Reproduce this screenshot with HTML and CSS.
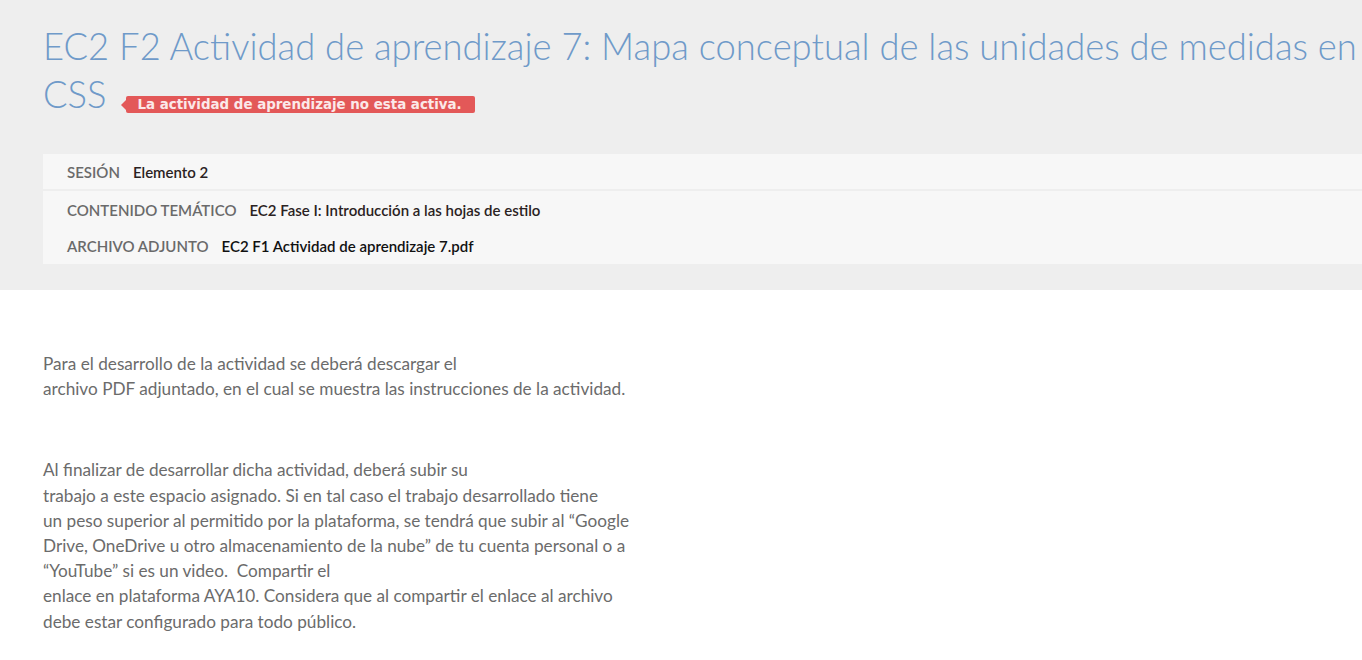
FILE: index.html
```html
<!DOCTYPE html>
<html lang="es">
<head>
<meta charset="utf-8">
<title>EC2 F2 Actividad de aprendizaje 7</title>
<link rel="stylesheet" href="styles.css">
</head>
<body>
<header class="hero">
  <div class="hero-inner">
    <h1 class="title">EC2 F2 Actividad de aprendizaje 7: Mapa conceptual de las unidades de medidas en CSS <span class="badge">La actividad de aprendizaje no esta activa.</span></h1>
    <div class="meta">
      <div class="meta-block">
        <div class="meta-row"><span class="label">SESIÓN</span><span class="value">Elemento 2</span></div>
      </div>
      <div class="meta-block meta-block-2">
        <div class="meta-row"><span class="label">CONTENIDO TEMÁTICO</span><span class="value">EC2 Fase I: Introducción a las hojas de estilo</span></div>
        <div class="meta-row"><span class="label">ARCHIVO ADJUNTO</span><span class="value value-file">EC2 F1 Actividad de aprendizaje 7.pdf</span></div>
      </div>
    </div>
  </div>
</header>
<main class="content">
  <p>Para el desarrollo de la actividad se deberá descargar el<br>archivo PDF adjuntado, en el cual se muestra las instrucciones de la actividad.</p>
  <p class="spacer">&nbsp;</p>
  <p>Al finalizar de desarrollar dicha actividad, deberá subir su<br>trabajo a este espacio asignado. Si en tal caso el trabajo desarrollado tiene<br>un peso superior al permitido por la plataforma, se tendrá que subir al “Google<br>Drive, OneDrive u otro almacenamiento de la nube” de tu cuenta personal o a<br>“YouTube” si es un video.&nbsp; Compartir el<br>enlace en plataforma AYA10. Considera que al compartir el enlace al archivo<br>debe estar configurado para todo público.</p>
</main>
</body>
</html>
```
FILE: styles.css
```css
html, body {
  margin: 0;
  padding: 0;
  overflow: hidden;
  background: #ffffff;
  font-family: Lato, "Open Sans", sans-serif;
}

.hero {
  background: #eeeeee;
  height: 290px;
  overflow: hidden;
}

.hero-inner {
  width: 1400px;
  padding: 22px 0 0 43px;
}

.title {
  margin: 0;
  font-family: Lato, sans-serif;
  font-weight: 300;
  font-size: 36.4px;
  line-height: 48px;
  color: #6f9ac9;
  width: 1340px;
}

.badge {
  position: relative;
  display: inline-block;
  vertical-align: -1px;
  margin-left: 10px;
  background: #e35858;
  color: #fbe9e9;
  font-family: "DejaVu Sans", Verdana, sans-serif;
  font-weight: bold;
  font-size: 13.4px;
  line-height: 17px;
  height: 17px;
  padding: 0 13px 0 11px;
  border-radius: 2px;
}

.badge::before {
  content: "";
  position: absolute;
  left: -5px;
  top: 4px;
  border-top: 5px solid transparent;
  border-bottom: 5px solid transparent;
  border-right: 5px solid #e35858;
}

.meta {
  margin-top: 36px;
  display: flex;
  flex-direction: column;
  gap: 2px;
}

.meta-block {
  background: #f7f7f7;
  padding: 0 24px;
  display: flex;
  flex-direction: column;
}

.meta-row {
  display: flex;
  align-items: center;
  gap: 13px;
  height: 35px;
  font-size: 15px;
}

.meta-block-2 {
  padding-top: 1px;
}

.meta-block-2 .meta-row {
  height: 36px;
}

.label {
  color: #6a6a6a;
  font-weight: 600;
  text-transform: uppercase;
}

.value {
  color: #2a2222;
  font-weight: 600;
}

.value-file {
  color: #111111;
}

.content {
  padding: 61px 43px 0;
}

.content p {
  margin: 0;
  font-size: 17.2px;
  line-height: 25.2px;
  color: #6b6b6b;
}

.content p.spacer {
  height: 56px;
}
```
